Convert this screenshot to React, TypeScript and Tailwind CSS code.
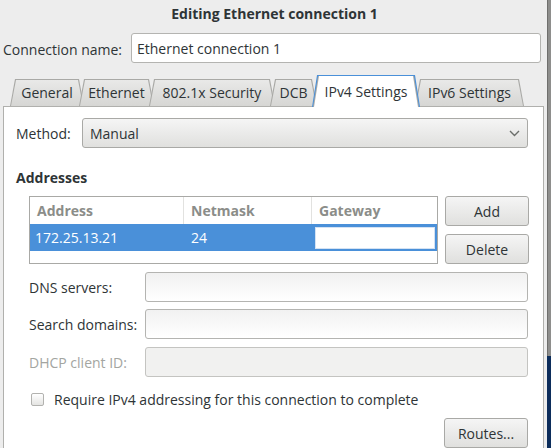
import React, { useState } from 'react'

const tabs = [
  { label: 'General', w: 74 },
  { label: 'Ethernet', w: 75 },
  { label: '802.1x Security', w: 126 },
  { label: 'DCB', w: 47 },
  { label: 'IPv4 Settings', w: 108 },
  { label: 'IPv6 Settings', w: 109 },
]

const inputCls =
  'h-[30px] rounded-[3px] border border-[#b4b4b1] bg-gradient-to-b from-[#f1f1f1] to-white'
const buttonBase =
  'h-[30px] rounded-[3px] border border-[#a9a9a6] bg-gradient-to-b from-[#f5f5f5] to-[#e0e0de] text-[#2e3436] flex items-center'
const buttonCls = `${buttonBase} w-[84px] justify-center`

function Tab({ label, w, active, first }: { label: string; w: number; active: boolean; first: boolean }) {
  const shape = '[clip-path:polygon(5px_0,calc(100%-5px)_0,100%_100%,0_100%)]'
  return (
    <div
      className={`relative flex items-center justify-center ${first ? '' : '-ml-[5px]'} ${
        active ? 'z-10 h-[32px] -mb-[1px]' : 'h-[27px]'
      }`}
      style={{ width: w }}
    >
      <div className={`absolute inset-0 rounded-t-[3px] ${shape} ${active ? 'bg-[#4a90d9]' : 'bg-[#a9a9a6]'}`} />
      <div
        className={`absolute left-[1px] right-[1px] top-[1px] bottom-0 rounded-t-[2px] ${shape} ${
          active ? 'bg-[#a9a9a6]' : 'bg-gradient-to-b from-[#e9e9e8] to-[#d6d6d4]'
        }`}
      />
      {active && (
        <div className={`absolute left-[2px] right-[2px] top-[1px] bottom-0 ${shape} bg-white`} />
      )}
      <span className={`relative text-[#2e3436] ${active ? 'mt-[1px]' : ''}`}>{label}</span>
    </div>
  )
}

export default function App() {
  const [activeTab] = useState('IPv4 Settings')
  const [requireIpv4, setRequireIpv4] = useState(false)

  return (
    <div
      className="w-[551px] h-[448px] flex overflow-hidden text-[14px] text-[#2e3436]"
      style={{ fontFamily: '"Open Sans", "Noto Sans", sans-serif' }}
    >
      <div className="w-[547px] h-full bg-[#ededed] flex flex-col">
        {/* title */}
        <div className="h-[26px] shrink-0 flex items-center justify-center font-bold pl-[2px] pt-[1px]">
          Editing Ethernet connection 1
        </div>

        {/* connection name */}
        <div className="mt-[7px] h-[30px] shrink-0 flex items-center">
          <span className="ml-[3px] w-[128px] pt-[3px]">Connection name:</span>
          <div className={`${inputCls} w-[410px] flex items-center px-[5px] from-white`}>
            Ethernet connection 1
          </div>
        </div>

        {/* tabs */}
        <div className="mt-[12px] h-[31px] shrink-0 flex items-end pl-[10px]">
          {tabs.map((t, i) => (
            <Tab key={t.label} label={t.label} w={t.w} active={t.label === activeTab} first={i === 0} />
          ))}
        </div>

        {/* panel */}
        <div className="ml-[3px] w-[541px] flex-1 min-h-0 overflow-hidden border border-[#b0b0ad] border-b-0 bg-white flex flex-col">
          <div className="mt-[11px] h-[30px] shrink-0 flex items-center">
            <span className="ml-[12px] w-[66px]">Method:</span>
            <div className={`${buttonBase} w-[446px] justify-between pl-[7px] pr-[7px]`}>
              <span>Manual</span>
              <svg width="11" height="7" viewBox="0 0 11 7">
                <path d="M1 1 L5.5 5.5 L10 1" fill="none" stroke="#6b6e6a" strokeWidth="1.4" />
              </svg>
            </div>
          </div>

          <div className="mt-[22px] ml-[12px] h-[16px] shrink-0 leading-[16px] font-bold">Addresses</div>

          <div className="mt-[10px] shrink-0 flex">
            <div className="ml-[25px] w-[409px] h-[68px] border border-[#a9a9a6] bg-white flex flex-col">
              <div className="h-[27px] flex text-[#8b8d89] font-bold">
                <div className="w-[154px] border-r border-[#e2e2e0] flex items-center pl-[7px]">Address</div>
                <div className="w-[128px] border-r border-[#e2e2e0] flex items-center pl-[7px]">Netmask</div>
                <div className="flex-1 flex items-center pl-[7px]">Gateway</div>
              </div>
              <div className="h-[27px] flex bg-[#4a90d9] text-white">
                <div className="w-[154px] flex items-center pl-[5px]">172.25.13.21</div>
                <div className="w-[128px] flex items-center pl-[7px]">24</div>
                <div className="flex-1 flex items-center pl-[3px] pr-[2px]">
                  <div className="h-[22px] w-full bg-white border border-[#d4e2f3]" />
                </div>
              </div>
            </div>
            <div className="ml-[7px] flex flex-col gap-[8px]">
              <button className={buttonCls}>Add</button>
              <button className={buttonCls}>Delete</button>
            </div>
          </div>

          <div className="mt-[8px] h-[30px] shrink-0 flex items-center">
            <span className="ml-[25px] w-[116px]">DNS servers:</span>
            <div className={`${inputCls} w-[383px]`} />
          </div>
          <div className="mt-[7px] h-[30px] shrink-0 flex items-center">
            <span className="ml-[25px] w-[116px]">Search domains:</span>
            <div className={`${inputCls} w-[383px]`} />
          </div>
          <div className="mt-[8px] h-[30px] shrink-0 flex items-center">
            <span className="ml-[25px] w-[116px] text-[#a3a5a1]">DHCP client ID:</span>
            <div className="h-[30px] w-[383px] rounded-[3px] border border-[#c4c4c1] bg-[#f1f1f0]" />
          </div>

          <label className="mt-[14px] h-[16px] shrink-0 flex items-center cursor-pointer">
            <span
              onClick={() => setRequireIpv4(!requireIpv4)}
              className="ml-[27px] w-[13px] h-[13px] rounded-[2px] border border-[#b2b2af] bg-gradient-to-b from-white to-[#e4e4e2] flex items-center justify-center"
            >
              {requireIpv4 && (
                <svg width="9" height="9" viewBox="0 0 9 9">
                  <path d="M1 4.5 L3.5 7 L8 1.5" fill="none" stroke="#2e3436" strokeWidth="1.5" />
                </svg>
              )}
            </span>
            <span className="ml-[10px]">Require IPv4 addressing for this connection to complete</span>
          </label>

          <div className="mt-[11px] shrink-0 flex">
            <button className={`${buttonCls} ml-[440px]`}>Routes...</button>
          </div>
        </div>
      </div>

      {/* desktop behind the dialog */}
      <div className="w-[4px] h-full flex flex-col">
        <div className="h-[356px] bg-[#8e8e8c] border-l border-[#6f6f6d]" />
        <div className="flex-1 bg-[#0c2d5b]" />
      </div>
    </div>
  )
}
